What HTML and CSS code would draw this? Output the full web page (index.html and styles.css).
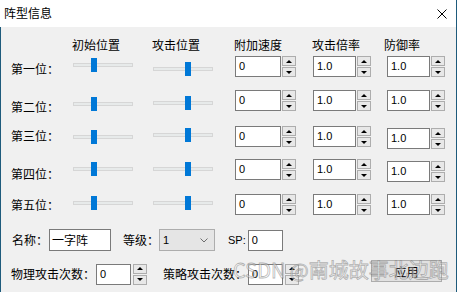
FILE: index.html
```html
<!DOCTYPE html>
<html lang="zh">
<head>
<meta charset="utf-8">
<title>阵型信息</title>
<link rel="stylesheet" href="styles.css">
</head>
<body>
<div class="window">
  <div class="titlebar">
    <span class="title">阵型信息</span>
    <svg class="close" width="10" height="10" viewBox="0 0 10 10"><path d="M0.5 0.5 L9.5 9.5 M9.5 0.5 L0.5 9.5" stroke="#000" stroke-width="1" fill="none"/></svg>
  </div>
  <div class="client">
    <div class="grid head">
      <span></span>
      <span class="hd">初始位置</span>
      <span class="hd">攻击位置</span>
      <span class="hd">附加速度</span>
      <span class="hd">攻击倍率</span>
      <span class="hd hd-def">防御率</span>
    </div>

    <div class="grid row r1">
      <span class="lbl">第一位：</span>
      <div class="slider s1"><span class="thumb t-init"></span></div>
      <div class="slider s2"><span class="thumb t-atk"></span></div>
      <div class="spin c1"><div class="edit">0</div><div class="arrows"><span class="up"></span><span class="down"></span></div></div>
      <div class="spin c2"><div class="edit narrow">1.0</div><div class="arrows"><span class="up"></span><span class="down"></span></div></div>
      <div class="spin c3"><div class="edit narrow">1.0</div><div class="arrows"><span class="up"></span><span class="down"></span></div></div>
    </div>

    <div class="grid row r2">
      <span class="lbl">第二位：</span>
      <div class="slider s1"><span class="thumb t-init"></span></div>
      <div class="slider s2"><span class="thumb t-atk"></span></div>
      <div class="spin c1"><div class="edit">0</div><div class="arrows"><span class="up"></span><span class="down"></span></div></div>
      <div class="spin c2"><div class="edit narrow">1.0</div><div class="arrows"><span class="up"></span><span class="down"></span></div></div>
      <div class="spin c3"><div class="edit narrow">1.0</div><div class="arrows"><span class="up"></span><span class="down"></span></div></div>
    </div>

    <div class="grid row r3">
      <span class="lbl">第三位：</span>
      <div class="slider s1"><span class="thumb t-init"></span></div>
      <div class="slider s2"><span class="thumb t-atk"></span></div>
      <div class="spin c1"><div class="edit">0</div><div class="arrows"><span class="up"></span><span class="down"></span></div></div>
      <div class="spin c2"><div class="edit narrow">1.0</div><div class="arrows"><span class="up"></span><span class="down"></span></div></div>
      <div class="spin c3"><div class="edit narrow">1.0</div><div class="arrows"><span class="up"></span><span class="down"></span></div></div>
    </div>

    <div class="grid row r4">
      <span class="lbl">第四位：</span>
      <div class="slider s1"><span class="thumb t-init"></span></div>
      <div class="slider s2"><span class="thumb t-atk"></span></div>
      <div class="spin c1"><div class="edit">0</div><div class="arrows"><span class="up"></span><span class="down"></span></div></div>
      <div class="spin c2"><div class="edit narrow">1.0</div><div class="arrows"><span class="up"></span><span class="down"></span></div></div>
      <div class="spin c3"><div class="edit narrow">1.0</div><div class="arrows"><span class="up"></span><span class="down"></span></div></div>
    </div>

    <div class="grid row r5">
      <span class="lbl">第五位：</span>
      <div class="slider s1"><span class="thumb t-init"></span></div>
      <div class="slider s2"><span class="thumb t-atk"></span></div>
      <div class="spin c1"><div class="edit">0</div><div class="arrows"><span class="up"></span><span class="down"></span></div></div>
      <div class="spin c2"><div class="edit narrow">1.0</div><div class="arrows"><span class="up"></span><span class="down"></span></div></div>
      <div class="spin c3"><div class="edit narrow">1.0</div><div class="arrows"><span class="up"></span><span class="down"></span></div></div>
    </div>

    <div class="line name-line">
      <span class="lbl name-lbl">名称：</span>
      <div class="edit name-edit">一字阵</div>
      <span class="lbl level-lbl">等级：</span>
      <div class="combo"><span>1</span><svg width="8" height="5" viewBox="0 0 8 5"><path d="M0.5 0.5 L4 4 L7.5 0.5" stroke="#6d6d6d" stroke-width="1" fill="none"/></svg></div>
      <span class="sp-lbl">SP:</span>
      <div class="edit sp-edit">0</div>
    </div>

    <div class="line count-line">
      <span class="lbl">物理攻击次数：</span>
      <div class="spin cnt"><div class="edit small">0</div><div class="arrows"><span class="up"></span><span class="down"></span></div></div>
      <span class="lbl strat-lbl">策略攻击次数：</span>
      <div class="spin cnt"><div class="edit small">0</div><div class="arrows"><span class="up"></span><span class="down"></span></div></div>
      <button class="apply">应用</button>
    </div>

    <div class="watermark">CSDN @南城故事北边跑</div>
  </div>
</div>
</body>
</html>
```

FILE: styles.css
```css
html, body {
  margin: 0;
  padding: 0;
  background: #f0f0f0;
}

body {
  font-family: "Liberation Sans", "Noto Sans CJK SC", sans-serif;
  font-size: 12px;
  color: #000;
}

.window {
  width: 457px;
  height: 292px;
  box-sizing: border-box;
  border-right: 1px solid #1e5b7c;
  overflow: hidden;
}

.titlebar {
  height: 27px;
  background: #fff;
  display: flex;
  align-items: center;
  justify-content: space-between;
  padding: 0 9px 0 4px;
}

.title {
  font-family: "Noto Sans CJK SC", sans-serif;
  font-size: 12px;
  line-height: 14px;
  margin-top: -1px;
}

.close {
  display: block;
  margin-top: 1px;
}

.client {
  position: relative;
  height: 265px;
  box-sizing: border-box;
  background: #f0f0f0;
  border-left: 1px solid #1e5b7c;
  padding-left: 10px;
}

.grid {
  display: grid;
  grid-template-columns: 62px 80px 82px 78px 74px 1fr;
  align-items: start;
}

.head { height: 28px; }
.hd {
  margin-top: 11px;
  line-height: 14px;
  font-family: "Noto Sans CJK SC", sans-serif;
  margin-left: -1px;
}
.hd-def { margin-left: -3px; }

.lbl {
  font-family: "Noto Sans CJK SC", sans-serif;
  font-size: 12px;
  line-height: 14px;
  white-space: nowrap;
}

.r1 { height: 33px; }
.r2 { height: 34px; }
.r3 { height: 34px; }
.r4 { height: 34px; }
.r5 { height: 32px; }

.r1 .lbl { margin-top: 7px; }
.r1 .s1 { margin-top: 3px; }
.r1 .s2 { margin-top: 7px; }
.r1 .spin { margin-top: 1px; }

.r2 .lbl { margin-top: 12px; }
.r2 .s1 { margin-top: 9px; }
.r2 .s2 { margin-top: 8px; }
.r2 .spin { margin-top: 2px; }

.r3 .lbl { margin-top: 7px; }
.r3 .s1 { margin-top: 8px; }
.r3 .s2 { margin-top: 6px; }
.r3 .spin { margin-top: 4px; }
.r3 .c3 { margin-top: 6px; }

.r4 .lbl { margin-top: 11px; }
.r4 .s1 { margin-top: 6px; }
.r4 .s2 { margin-top: 6px; }
.r4 .spin { margin-top: 3px; }
.r4 .c3 { margin-top: 5px; }

.r5 .lbl { margin-top: 8px; }
.r5 .s1 { margin-top: 6px; }
.r5 .s2 { margin-top: 6px; }
.r5 .spin { margin-top: 4px; }

/* slider */
.slider {
  position: relative;
  width: 60px;
  height: 14px;
}
.slider::before {
  content: "";
  position: absolute;
  left: 0;
  right: 0;
  top: 5px;
  height: 4px;
  box-sizing: border-box;
  background: #e7eaea;
  border: 1px solid #d6d6d6;
}
.thumb {
  position: absolute;
  top: 0;
  width: 6px;
  height: 14px;
  background: #0078d7;
}
.t-init { left: 18px; }
.t-atk { left: 32px; }

/* spin box */
.spin {
  display: flex;
  gap: 1px;
}
.edit {
  width: 46px;
  height: 21px;
  box-sizing: border-box;
  border: 1px solid #7a7a7a;
  background: #fff;
  font-family: "Liberation Sans", "Noto Sans CJK SC", sans-serif;
  font-size: 11px;
  line-height: 19px;
  padding-left: 3px;
  white-space: nowrap;
}
.edit.narrow { width: 43px; }
.edit.small { width: 35px; }

.arrows {
  display: flex;
  flex-direction: column;
  gap: 1px;
  width: 14px;
}
.up, .down {
  height: 10px;
  box-sizing: border-box;
  border: 1px solid #adadad;
  background: #e8e8e8;
  display: flex;
  align-items: center;
  justify-content: center;
}
.up::after {
  content: "";
  border-left: 3px solid transparent;
  border-right: 3px solid transparent;
  border-bottom: 3px solid #000;
}
.down::after {
  content: "";
  border-left: 3px solid transparent;
  border-right: 3px solid transparent;
  border-top: 3px solid #000;
}

/* bottom lines */
.line {
  display: flex;
  align-items: center;
  height: 22px;
}
.name-line { margin-top: 7px; }
.name-lbl { margin-left: 1px; }
.name-edit {
  width: 62px;
  height: 22px;
  line-height: 20px;
  font-family: "Noto Sans CJK SC", sans-serif;
  font-size: 12px;
  padding-left: 2px;
  margin-left: 1px;
}
.level-lbl { margin-left: 12px; }
.combo {
  width: 56px;
  height: 22px;
  box-sizing: border-box;
  border: 1px solid #adadad;
  background: #e5e5e5;
  display: flex;
  align-items: center;
  justify-content: space-between;
  padding: 0 6px 0 3px;
  font-size: 11px;
}
.combo svg { display: block; }
.sp-lbl {
  margin-left: 13px;
  font-size: 11px;
}
.sp-edit {
  width: 35px;
  margin-left: 2px;
}

.count-line { margin-top: 12px; }
.cnt { margin-left: 1px; gap: 2px; }
.strat-lbl { margin-left: 16px; }
.apply {
  align-self: flex-start;
  margin: -3px 0 0 72px;
  width: 71px;
  height: 22px;
  box-sizing: border-box;
  border: 1px solid #adadad;
  background: #e1e1e1;
  font-family: "Noto Sans CJK SC", sans-serif;
  font-size: 12px;
  padding: 0;
  color: #000;
}

.watermark {
  position: absolute;
  left: 232px;
  top: 233px;
  font-family: "Noto Sans CJK SC", sans-serif;
  font-size: 20px;
  line-height: 20px;
  white-space: nowrap;
  color: rgba(255, 255, 255, 0.45);
  -webkit-text-stroke: 0.8px rgba(110, 110, 110, 0.5);
  pointer-events: none;
}
```
